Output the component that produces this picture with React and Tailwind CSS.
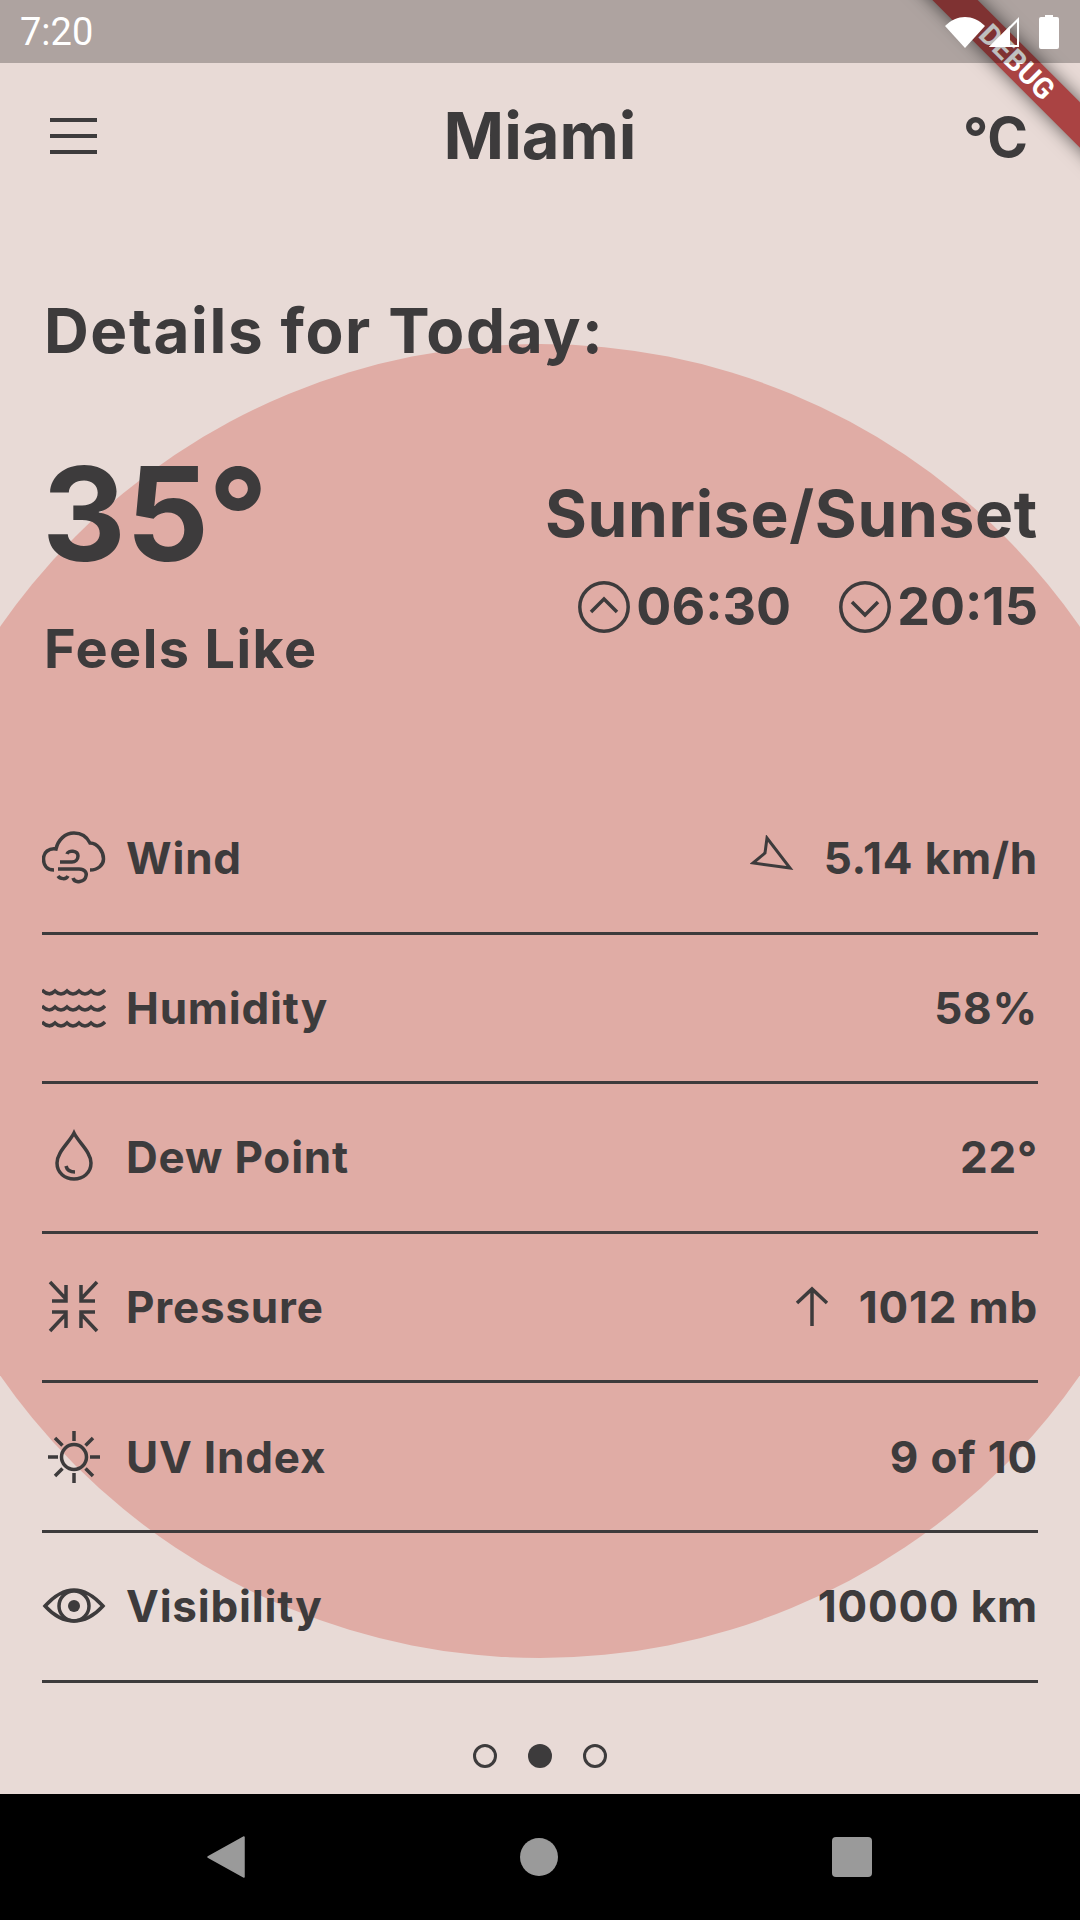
const INK = "#3d3b3c";

function Ic({ children, sw = 3.5 }) {
  return (
    <svg viewBox="0 0 64 64" className="w-[64px] h-[64px] shrink-0" fill="none" stroke={INK} strokeWidth={sw} strokeLinecap="butt" strokeLinejoin="miter">
      {children}
    </svg>
  );
}

const WindCloud = () => (
  <Ic>
    <path d="M12 44 C4 44 1.5 38 1.5 33 C1.5 26 7 22 14 23 C16 14 23 7 32 7 C40 7 45 11 48 17 C56 17 61.5 26 61.5 33 C61.5 39 56 44 48 44" />
    <path d="M25 28 C26 24 36 24 36 30 C36 34 33 36 30 36 L18 36 M16 43 L37 43 C43 43 45 47 44 50 C43 56 33 58 31 52 M16 50 C18 53 24 54 26 50" />
  </Ic>
);
const Waves = () => (
  <Ic>
    {[16, 32, 48].map((y) => (
      <path key={y} d={`M0 ${y - 2} C5 ${y + 3} 9 ${y + 3} 13 ${y - 1} C17 ${y + 3} 21 ${y + 3} 25 ${y - 1} C29 ${y + 3} 33 ${y + 3} 37 ${y - 1} C41 ${y + 3} 45 ${y + 3} 49 ${y - 1} C53 ${y + 3} 58 ${y + 3} 63 ${y - 2}`} />
    ))}
  </Ic>
);
const Drop = () => (
  <Ic>
    <path d="M32 8 C27 18 15 27 15 38 C15 48 23 54 32 54 C41 54 49 48 49 38 C49 27 37 18 32 8 Z" />
    <path d="M24 41 C25 45 28 47 33 47" />
  </Ic>
);
const Compress = () => (
  <Ic>
    <path d="M8 7 L24 24 M10 26 H24 V10 M55 7 L39 24 M53 26 H39 V10 M8 56 L24 39 M10 37 H24 V53 M55 56 L39 39 M53 37 H39 V53" />
  </Ic>
);
const Sun = () => (
  <Ic>
    <circle cx="32" cy="32" r="12.5" />
    <path d="M32 6 V16 M32 48 V58 M6 32 H16 M48 32 H58 M13 13 L20.5 20.5 M43.5 43.5 L51 51 M51 13 L43.5 20.5 M20.5 43.5 L13 51" />
  </Ic>
);
const Eye = () => (
  <Ic>
    <path d="M3 32 C14 20 23 16 32 16 C41 16 50 20 61 32 C50 44 41 47 32 47 C23 47 14 44 3 32 Z" />
    <circle cx="32" cy="32" r="15" />
    <circle cx="32" cy="32" r="6" fill={INK} stroke="none" />
  </Ic>
);

const rows = [
  { icon: <WindCloud />, label: "Wind", value: "5.14 km/h", extra: (
    <svg viewBox="0 0 44 36" className="w-[44px] h-[36px] mr-[30px] mb-[10px]" fill="none" stroke={INK} strokeWidth="3">
      <path d="M17 3 L15 18 L3 28 L40 33 Z" />
    </svg>
  ) },
  { icon: <Waves />, label: "Humidity", value: "58%" },
  { icon: <Drop />, label: "Dew Point", value: "22°" },
  { icon: <Compress />, label: "Pressure", value: "1012 mb", extra: (
    <svg viewBox="0 0 34 42" className="w-[34px] h-[42px] mr-[30px]" fill="none" stroke={INK} strokeWidth="3.5">
      <path d="M17 40 V3 M2 17 L17 3 L32 17" />
    </svg>
  ) },
  { icon: <Sun />, label: "UV Index", value: "9 of 10" },
  { icon: <Eye />, label: "Visibility", value: "10000 km" },
];

export default function App() {
  return (
    <div className="relative w-[1080px] h-[1920px] overflow-hidden bg-[#e8dad6] text-[#3d3b3c] font-['Inter',sans-serif]">
      {/* Sun circle */}
      <div className="absolute left-[-117px] top-[344px] w-[1314px] h-[1314px] rounded-full bg-[#e0aca5]" />

      {/* Debug ribbon, lying below the status bar scrim */}
      <div className="absolute z-10 left-[882px] top-[46px] w-[270px] h-[32px] rotate-45 bg-[#aa4343] shadow-[0_0_18px_rgba(0,0,0,0.6)] flex items-center justify-center text-white text-[29px] font-bold font-['Roboto',sans-serif] leading-none">
        DEBUG
      </div>

      <div className="relative flex flex-col h-full">
        {/* Status bar */}
        <div className="relative z-20 h-[63px] bg-black/25 flex items-center justify-between pl-[20px] pr-[21px] text-white">
          <span className="text-[38px] leading-none font-['Roboto',sans-serif]">7:20</span>
          <div className="flex items-center">
            <svg viewBox="0 0 40 32" className="w-[40px] h-[32px]"><path d="M0 10 C12 -2 28 -2 40 10 L20 32 Z" fill="#fff" /></svg>
            <svg viewBox="0 0 32 32" className="w-[32px] h-[32px] ml-[3px]"><path d="M1 31 L31 1 V31 Z M29 6 L6 29 H29 Z" fill="#fff" fillRule="evenodd" /><path d="M1 31 L22 10 V31 Z" fill="#fff" /></svg>
            <svg viewBox="0 0 20 34" className="w-[20px] h-[34px] ml-[19px]"><path d="M6 0 H14 V2 H18 Q20 2 20 4 V32 Q20 34 18 34 H2 Q0 34 0 32 V4 Q0 2 2 2 H6 Z" fill="#fff" /></svg>
          </div>
        </div>

        {/* App bar */}
        <div className="relative h-[145px] flex items-center justify-between pl-[50px] pr-[52px]">
          <div className="flex flex-col gap-[12px]">
            <div className="w-[47px] h-[4px] bg-[#3d3b3c]" />
            <div className="w-[47px] h-[4px] bg-[#3d3b3c]" />
            <div className="w-[47px] h-[4px] bg-[#3d3b3c]" />
          </div>
          <span className="absolute inset-0 flex items-center justify-center text-[65px] leading-none font-bold">Miami</span>
          <span className="relative text-[55px] leading-none font-bold mt-[3px]">°C</span>
        </div>

        {/* Heading */}
        <div className="pl-[44px] mt-[88px] text-[62px] leading-[70px] font-bold tracking-[1.6px]">Details for Today:</div>

        {/* Summary */}
        <div className="flex justify-between pl-[44px] pr-[42px] mt-[83px]">
          <div>
            <div className="text-[130px] leading-[130px] font-bold ml-[-2px]">35°</div>
            <div className="text-[54px] leading-[60px] font-bold mt-[40px] tracking-[1.4px]">Feels Like</div>
          </div>
          <div className="flex flex-col items-end mt-[29px]">
            <div className="text-[64px] leading-[72px] font-bold tracking-[0.7px]">Sunrise/Sunset</div>
            <div className="flex items-center mt-[25px] text-[52px] leading-[64px] font-bold">
              <svg viewBox="0 0 52 52" className="w-[52px] h-[52px] mr-[6px]" fill="none" stroke={INK} strokeWidth="3.5"><circle cx="26" cy="26" r="24.2" /><path d="M13 31 L26 18 L39 31" /></svg>
              <span>06:30</span>
              <svg viewBox="0 0 52 52" className="w-[52px] h-[52px] ml-[48px] mr-[6px]" fill="none" stroke={INK} strokeWidth="3.5"><circle cx="26" cy="26" r="24.2" /><path d="M13 21 L26 34 L39 21" /></svg>
              <span>20:15</span>
            </div>
          </div>
        </div>

        {/* Rows */}
        <div className="mt-[106px] mx-[42px]">
          {rows.map((r) => (
            <div key={r.label} className="h-[149.6px] flex items-center justify-between border-b-[3px] border-[#3d3b3c]">
              <div className="flex items-center gap-[20px]">
                {r.icon}
                <span className="text-[44px] leading-none font-bold tracking-[0.8px]">{r.label}</span>
              </div>
              <div className="flex items-center">
                {r.extra}
                <span className="text-[44px] leading-none font-bold tracking-[0.8px]">{r.value}</span>
              </div>
            </div>
          ))}
        </div>

        {/* Dots */}
        <div className="flex-1 flex items-center justify-center gap-[31px] pt-[36px]">
          <div className="w-[24px] h-[24px] rounded-full border-[3px] border-[#3d3b3c]" />
          <div className="w-[24px] h-[24px] rounded-full bg-[#3d3b3c]" />
          <div className="w-[24px] h-[24px] rounded-full border-[3px] border-[#3d3b3c]" />
        </div>

        {/* Nav */}
        <div className="h-[126px] bg-black flex items-center justify-center">
          <div className="flex w-[664px] items-center justify-between">
            <svg viewBox="0 0 38 42" className="w-[38px] h-[42px] ml-[-1px]"><path d="M37 1 V41 L1 21 Z" fill="#9a9a9a" stroke="#9a9a9a" strokeWidth="1.5" strokeLinejoin="round" /></svg>
            <div className="w-[38px] h-[38px] rounded-full bg-[#9a9a9a]" />
            <div className="w-[40px] h-[40px] rounded-[4px] bg-[#9a9a9a]" />
          </div>
        </div>
      </div>
    </div>
  );
}
